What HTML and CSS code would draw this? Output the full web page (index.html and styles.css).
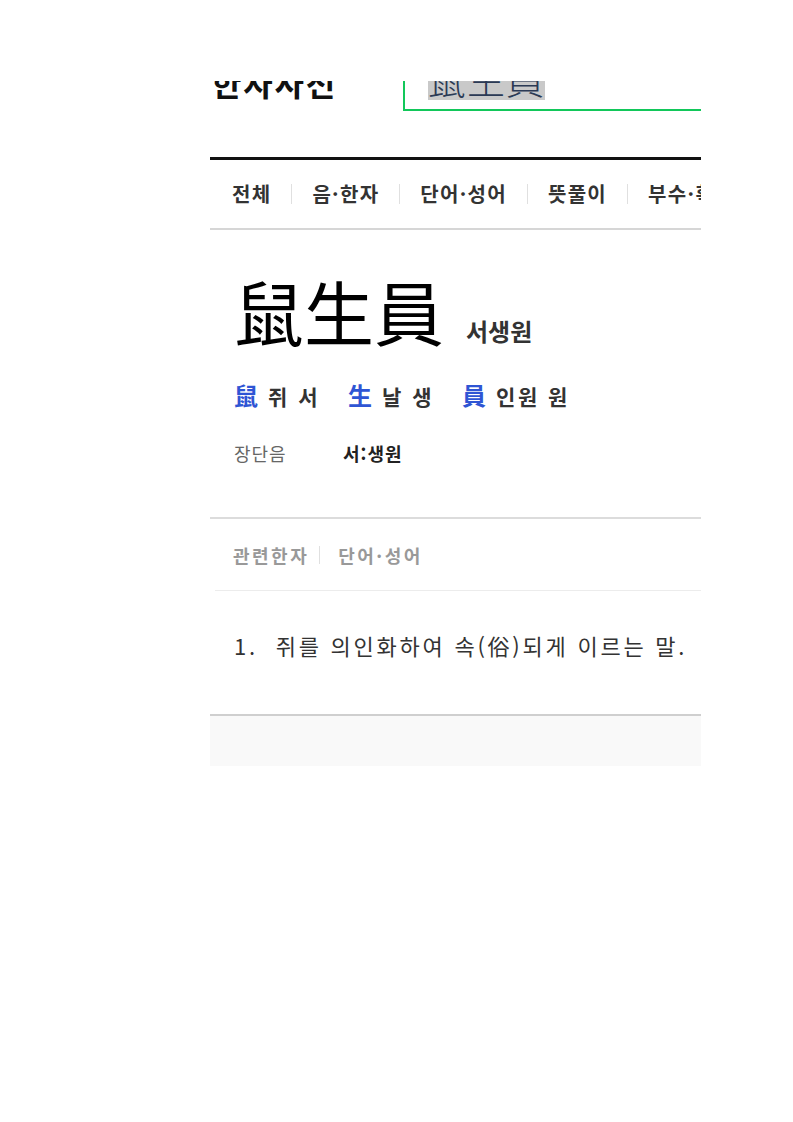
FILE: index.html
```html
<!DOCTYPE html>
<html lang="ko">
<head>
<meta charset="utf-8">
<title>한자사전 - 鼠生員</title>
<link rel="stylesheet" href="styles.css">
</head>
<body>
<div class="page">
  <div class="header">
    <div class="logo">한자사전</div>
    <div class="search">
      <span class="query">鼠生員</span>
    </div>
  </div>

  <div class="nav">
    <span class="nav-item first">전체</span>
    <span class="nav-item">음·한자</span>
    <span class="nav-item">단어·성어</span>
    <span class="nav-item">뜻풀이</span>
    <span class="nav-item last">부수·획수</span>
  </div>

  <div class="entry">
    <div class="title-row">
      <span class="hanja-big">鼠生員</span>
      <span class="reading">서생원</span>
    </div>
    <div class="chars">
      <span class="ch"><span class="h">鼠</span><span class="m">쥐 서</span></span>
      <span class="ch"><span class="h">生</span><span class="m">날 생</span></span>
      <span class="ch"><span class="h">員</span><span class="m">인원 원</span></span>
    </div>
    <div class="length">
      <span class="label">장단음</span>
      <span class="value">서:생원</span>
    </div>
  </div>

  <div class="tabs">
    <span class="tab first">관련한자</span>
    <span class="tab">단어·성어</span>
  </div>

  <div class="meaning">
    <p class="def">1.&nbsp; 쥐를 의인화하여 속(俗)되게 이르는 말.</p>
  </div>

  <div class="footer"></div>
</div>
</body>
</html>
```

FILE: styles.css
```css
html, body {
  margin: 0;
  padding: 0;
  background: #fff;
}

body {
  font-family: "Noto Sans CJK KR", "Noto Sans", sans-serif;
  color: #222;
}

.page {
  margin: 81px 0 0 210px;
  width: 491px;
  overflow: hidden;
}

.header {
  display: flex;
  align-items: flex-end;
  height: 60px;
  margin-top: -30px;
  margin-bottom: 46px;
}

.logo {
  font-size: 32px;
  font-weight: 700;
  line-height: 1;
  color: #111;
  margin-left: 2px;
  margin-bottom: 13px;
  width: 191px;
  flex: none;
  letter-spacing: 1.8px;
  white-space: nowrap;
}

.search {
  flex: none;
  width: 400px;
  height: 60px;
  box-sizing: border-box;
  border-left: 2px solid #12c75a;
  border-bottom: 2px solid #12c75a;
  display: flex;
  align-items: flex-end;
  padding-left: 23px;
  padding-bottom: 9px;
}

.query {
  font-size: 38px;
  line-height: 44px;
  font-weight: 300;
  color: #2b3a55;
  background: #c9c9c9;
  letter-spacing: 1px;
}

.nav {
  display: flex;
  align-items: center;
  border-top: 3px solid #111;
  border-bottom: 2px solid #d6d6d6;
  height: 68px;
  white-space: nowrap;
}

.nav-item {
  font-size: 20px;
  font-weight: 700;
  color: #333;
  padding: 0 20px;
  line-height: 1;
  letter-spacing: 1.3px;
  border-left: 1px solid #e0e0e0;
}

.nav-item.first {
  padding-left: 22px;
  border-left: none;
}

.entry {
  padding: 41px 0 51px 24px;
  border-bottom: 2px solid #dcdcdc;
}

.title-row {
  display: flex;
  align-items: baseline;
}

.hanja-big {
  font-size: 70px;
  line-height: 80px;
  font-weight: 400;
  color: #000;
}

.reading {
  font-size: 24px;
  font-weight: 700;
  color: #333;
  margin-left: 22px;
}

.chars {
  display: flex;
  align-items: baseline;
  gap: 28px;
  margin-top: 29px;
}

.ch {
  display: flex;
  align-items: baseline;
  gap: 10px;
}

.ch .h {
  font-size: 24px;
  font-weight: 700;
  color: #2f55d4;
  line-height: 30px;
}

.ch .m {
  font-size: 21px;
  font-weight: 700;
  color: #333;
  letter-spacing: 2.5px;
}

.length {
  display: flex;
  align-items: baseline;
  margin-top: 29px;
  font-size: 18px;
  letter-spacing: 1px;
}

.length .label {
  width: 109px;
  color: #666;
}

.length .value {
  font-weight: 700;
  color: #222;
}

.tabs {
  display: flex;
  align-items: center;
  height: 71px;
  margin-left: 5px;
  border-bottom: 1px solid #ececec;
  white-space: nowrap;
}

.tab {
  font-size: 18px;
  font-weight: 700;
  color: #999;
  padding: 0 10px 0 18px;
  line-height: 1;
  letter-spacing: 2.5px;
  border-left: 1px solid #e0e0e0;
}

.tab.first {
  padding-left: 18px;
  border-left: none;
}

.meaning {
  padding: 39px 0 54px 24px;
  border-bottom: 2px solid #cfcfcf;
}

.def {
  margin: 0;
  font-size: 22px;
  line-height: 30px;
  color: #333;
  letter-spacing: 2.75px;
  white-space: nowrap;
}

.footer {
  height: 50px;
  background: #f9f9f9;
}
```
